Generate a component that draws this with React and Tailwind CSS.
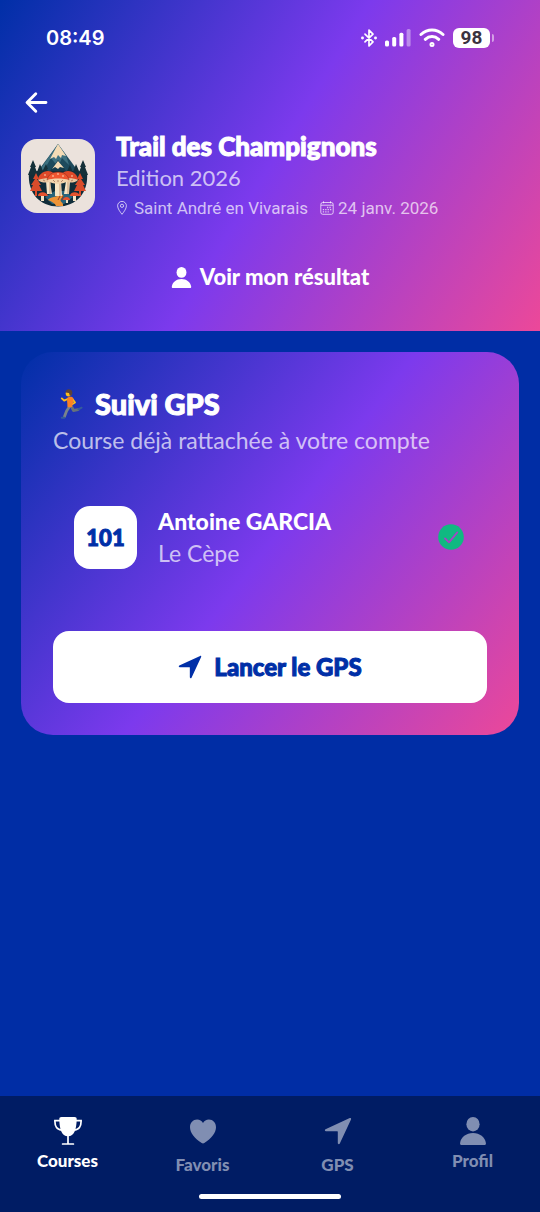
import React, { useState } from "react";
import { IoArrowBack } from "react-icons/io5";

const PersonIcon = ({ className }) => (
  <svg viewBox="0 0 28 28" fill="currentColor" className={className} aria-hidden="true">
    <ellipse cx="14" cy="7.2" rx="6.6" ry="7.2" />
    <path d="M2.8 28C1.5 28 .9 27.200 1.100 25.900 1.900 20.300 7.200 16 14 16s12.100 4.300 12.900 9.900c.2 1.300-.4 2.100-1.700 2.100z" />
  </svg>
);

const NavigateIcon = ({ className }) => (
  <svg viewBox="0 0 28 28" fill="currentColor" className={className} aria-hidden="true">
    <path d="M25.800 1.100 1.500 12.300c-1 .5-.8 2 .5 2h11.300c.3 0 .5.2.5.5v11.300c0 1.300 1.500 1.500 2 .5L27 2.400c.4-.9-.3-1.700-1.200-1.300z" />
  </svg>
);

const HeartIcon = ({ className }) => (
  <svg viewBox="0 0 28 28" fill="currentColor" className={className} aria-hidden="true">
    <path d="M14 26.500c-.4 0-.9-.2-1.300-.5C5.700 21.300 1 15.900 1 10.200 1 5.700 4.100 2.500 8.100 2.500c2.600 0 4.700 1.400 5.900 3.600 1.200-2.200 3.300-3.600 5.900-3.600 4 0 7.100 3.200 7.100 7.700 0 5.700-4.700 11.100-11.700 15.800-.4.300-.9.5-1.300.5z" />
  </svg>
);

const TrophyIcon = ({ className }) => (
  <svg viewBox="0 0 28 28" fill="none" className={className} aria-hidden="true">
    <path d="M7.500 0h13c1.500 0 2.300.8 2.200 2.400C22.400 12 20.500 19.300 14 19.300S5.600 12 5.300 2.400C5.200.8 6 0 7.500 0z" fill="currentColor" />
    <path d="M6 3.600H.9C.7 9.500 3.100 13 8 13M22 3.600h5.100C27.300 9.500 24.900 13 20 13M14 18v8.500M8.600 27h10.800" stroke="currentColor" strokeWidth="1.700" strokeLinecap="round" />
  </svg>
);

const PinIcon = () => (
  <svg viewBox="0 0 12 16" fill="none" stroke="currentColor" className="h-4 w-3" aria-hidden="true">
    <path d="M6 14.300C4.200 12 1.600 8.600 1.600 5.800a4.400 4.400 0 0 1 8.800 0C10.400 8.600 7.800 12 6 14.300z" />
    <circle cx="6" cy="5.800" r="1.600" />
  </svg>
);

const CalendarIcon = () => (
  <svg viewBox="0 0 14 14" fill="none" stroke="currentColor" className="size-3.5" aria-hidden="true">
    <rect x=".8" y="1.500" width="12.400" height="11.800" rx="2" />
    <path d="M1 4.200h12M3.500 .3v2M10.500 .3v2" />
    <path d="M7 6.500h4.500M2.800 8.600h8.700M2.800 10.800h6" strokeWidth="1.300" strokeDasharray="1.300 1.100" />
  </svg>
);

const RunnerIcon = () => (
  <svg viewBox="0 0 24 32" fill="none" className="h-8 w-6" strokeLinecap="round" strokeLinejoin="round" aria-hidden="true">
    <path d="M12.500 18.500 14.500 22.500 19 21.700" stroke="#66717a" strokeWidth="2.800" />
    <path d="M19.500 21.300 22.600 19.700" stroke="#345c9c" strokeWidth="2" />
    <path d="M10.500 18.500 7.600 23 5.500 28.500" stroke="#78838b" strokeWidth="2.800" />
    <path d="M5.300 29.800H2.800" stroke="#345c9c" strokeWidth="2" />
    <path d="M8.600 11 5.200 12.600 2.800 10.400" stroke="#ffbe19" strokeWidth="1.900" />
    <path d="M13.500 11 16 14.500 13.500 16" stroke="#ffbe19" strokeWidth="1.900" />
    <path d="M8.500 9.600c2-1.300 5-1 5.700.5.600 2.500-.7 6.300-1.100 8.600-1.500 1-4 .8-4.700-.3.300-3-1-6.200.1-8.800z" fill="#fb8124" />
    <circle cx="9.600" cy="5.500" r="2.900" fill="#ffbe19" />
    <path d="M6.500 4.500C6.500 2.300 8.200 1.200 10 1.300c2.400.1 3.800 2.100 3.300 4.200-.3 1.500-1.300 2.400-2.400 2.600L10 5z" fill="#5d4239" />
  </svg>
);

const CheckIcon = () => (
  <svg viewBox="0 0 26 26" className="size-[26px]" role="img" aria-label="Rattachée">
    <circle cx="13" cy="13" r="12.800" fill="#10b981" />
    <path d="m7 14.400 4 3.900 8.200-9.800" fill="none" stroke="#a93fc7" strokeWidth="1.800" strokeLinecap="round" strokeLinejoin="round" />
  </svg>
);

const RaceLogo = () => (
  <svg viewBox="0 0 74 74" className="size-[74px] shrink-0 rounded-2xl" role="img" aria-label="Logo Trail des Champignons">
    <rect width="74" height="74" fill="#ebe2dc" />
    {/* mountain */}
    <path d="M37 5 60 36H14z" fill="#1d4a5c" />
    <path d="m37 5 8 11 3 10-7-7-4 9-7-9-7 12-5 1z" fill="#3e7180" />
    <path d="m37 5 8 12-4-1-1 3-3-3-2 4-2-2-4 2z" fill="#f5dcb6" />
    <path d="m37 21 11 15H26z" fill="#143b4b" />
    <path d="m37 22 6 7-4-1-2 2-3-2-3 2z" fill="#f5dcb6" />
    {/* forest and ground */}
    <path d="M8 33C6 54 19 67.500 37 67.500S68 54 66 33l-9-1H17z" fill="#112d39" />
    <path d="m12 21-3 7h1l-3 8h10l-3-8h1zM19 25l-3 8h1l-2 6h9l-3-7h1zM25 25l-3 6v6h7l-3-7h1zM62 21l-3 7h1l-3 8h10l-3-8h1zM55 25l-3 8h1l-2 6h9l-3-7h1zM49 26l-3 6v6h6l-1-7z" fill="#143039" />
    <path d="m15 34-3 6h2l-4 6h2l-3 6h5v5h2v-5h5l-3-6h2l-4-6h2zM59 34l-3 6h2l-4 6h2l-3 6h5v5h2v-5h5l-3-6h2l-4-6h2z" fill="#d94c2b" />
    <path d="m24 58 10-6h10l8 6-9 7H31z" fill="#28647b" />
    <path d="M40 55c-3 3-12 3-13 6 4 2 7 3 8 6h7c1-4-4-4-2-7s4-3 0-5z" fill="#ee9436" />
    <path d="m39 57-2 4m5-4-1 4" stroke="#933b25" />
    {/* stems */}
    <path d="M25 42h4l2 13h-5zM45 42h4l-1 13h-5zM34 42h6l1 15h-7zM20 56h3v6h-3zM52 56h3v6h-3zM45 60h2v4h-2z" fill="#f6e5c5" />
    <path d="M39 42v15M29 43v12M47 43v12" stroke="#c69b77" />
    {/* caps */}
    <path d="M17 41c0-5 5-9 10-9 4 0 8 3 9 8zM38 40c1-5 5-8 9-8 5 0 10 4 10 9z" fill="#df4929" />
    <path d="M17 41c4-2 14-2 17-1-3 4-13 5-17 1zM40 40c5-1 14-1 17 1-4 4-13 3-17-1z" fill="#eac8a0" />
    <path d="M26 41c1-5 5-8 11-8s10 3 11 8z" fill="#ef5630" stroke="#7a261b" strokeWidth=".5" />
    <path d="M26 41c5-2 17-2 22 0-4 5-18 5-22 0z" fill="#f2d5ad" />
    <path d="m32 41 2 2m8-2-2 2m-3-2v2M22 41l2 1m28-1-2 1" stroke="#8c5440" strokeWidth=".6" />
    <path d="M17 57c0-5 9-5 10 0zM49 57c0-5 9-5 10 0zM42 61c0-4 7-4 7 0z" fill="#e6532e" />
    <g fill="#ffe9c5">
      <circle cx="32" cy="37" r=".8" />
      <circle cx="37" cy="35" r=".8" />
      <circle cx="42" cy="37" r=".8" />
      <circle cx="24" cy="36" r=".8" />
      <circle cx="51" cy="37" r=".8" />
    </g>
  </svg>
);

const StatusBar = () => (
  <div className="flex h-[76px] items-center justify-between px-[46px] text-white">
    <span className="font-['Inter'] text-xl font-semibold">08:49</span>
    <div className="flex items-center gap-2">
      <svg viewBox="0 0 16 20" fill="none" stroke="currentColor" strokeWidth="1.700" strokeLinejoin="round" strokeLinecap="round" className="h-5 w-4" aria-hidden="true">
        <path d="m4 6.200 8 7.600-4 4.200V2l4 4.200-8 7.600" />
        <circle cx="1.500" cy="10" r=".6" fill="currentColor" />
        <circle cx="14.500" cy="10" r=".6" fill="currentColor" />
      </svg>
      <svg viewBox="0 0 26 20" fill="currentColor" className="h-5 w-[26px]" aria-hidden="true">
        <rect y="12.500" width="4" height="6" rx="1.500" />
        <rect x="7.200" y="9" width="4" height="9.500" rx="1.500" />
        <rect x="14.400" y="4.800" width="4" height="13.700" rx="1.500" />
        <rect x="21.600" y="1" width="4" height="17.500" rx="1.500" opacity=".4" />
      </svg>
      <svg viewBox="0 0 26 20" fill="none" stroke="currentColor" strokeWidth="3" strokeLinecap="round" className="h-5 w-[26px]" aria-hidden="true">
        <path d="M2 6.500c6.500-6 15.500-6 22 0M6.300 11.300c4-3.800 9.400-3.800 13.400 0" />
        <circle cx="13" cy="16.500" r="1" />
      </svg>
      <div className="flex items-center gap-[2px]">
        <span className="flex h-5 w-[37px] items-center justify-center rounded-md bg-white font-['Roboto'] text-[19px] font-bold text-[#3b3340]">
          98
        </span>
        <span className="h-2 w-[2px] rounded-r bg-white/50" />
      </div>
    </div>
  </div>
);

const tabs = [
  { id: "courses", label: "Courses", Icon: TrophyIcon, gap: "gap-1" },
  { id: "favoris", label: "Favoris", Icon: HeartIcon, gap: "gap-2" },
  { id: "gps", label: "GPS", Icon: NavigateIcon, gap: "gap-2" },
  { id: "profil", label: "Profil", Icon: PersonIcon, gap: "gap-1" },
];

const App = () => {
  const [activeTab, setActiveTab] = useState("courses");

  return (
    <div className="flex min-h-screen flex-col bg-[#002da5] font-['Lato',sans-serif] text-white">
      <header className="bg-[linear-gradient(121.5deg,#002fa7_0%,#7c3aed_50%,#ec4899_100%)] pb-[38px]">
        <StatusBar />
        <div className="px-[21px]">
          <button type="button" aria-label="Retour" className="block pt-[11px] pb-3">
            <IoArrowBack className="size-[31px]" />
          </button>
          <div className="flex items-center gap-[21px]">
            <RaceLogo />
            <div>
              <h1 className="text-[26px] leading-8 font-black [-webkit-text-stroke:1px]">Trail des Champignons</h1>
              <p className="text-[22px] leading-8 text-white/70">Edition 2026</p>
              <div className="flex items-center gap-3 font-['Roboto'] text-[17px] leading-7 text-white/70">
                <span className="flex items-center gap-1.5">
                  <PinIcon />
                  Saint André en Vivarais
                </span>
                <span className="flex items-center gap-1">
                  <CalendarIcon />
                  24 janv. 2026
                </span>
              </div>
            </div>
          </div>
          <button type="button" className="mx-auto mt-[39px] flex items-center gap-2 text-[22px] leading-8 font-black">
            <PersonIcon className="size-[21px]" />
            Voir mon résultat
          </button>
        </div>
      </header>

      <main className="flex-1 p-[21px]">
        <section className="rounded-[32px] bg-[linear-gradient(127.5deg,#002fa7_0%,#7c3aed_50%,#ec4899_100%)] p-8">
          <h2 className="flex items-center gap-3 pl-1.5 text-[29px] leading-10 font-black [-webkit-text-stroke:1px]">
            <RunnerIcon />
            Suivi GPS
          </h2>
          <p className="text-[23px] leading-8 text-white/70">Course déjà rattachée à votre compte</p>

          <div className="mt-7 mb-[41px] flex items-center gap-[21px] py-[21px] pr-[23px] pl-[21px]">
            <span className="flex size-[63px] items-center justify-center rounded-2xl bg-white text-[22px] font-black text-[#002fa7] [-webkit-text-stroke:1px]">
              101
            </span>
            <div className="flex-1">
              <p className="text-[23px] leading-8 font-black">Antoine GARCIA</p>
              <p className="text-[23px] leading-8 text-white/70">Le Cèpe</p>
            </div>
            <CheckIcon />
          </div>

          <button
            type="button"
            className="flex h-[72px] w-full items-center justify-center gap-3 rounded-2xl bg-white text-2xl font-black text-[#002fa7] [-webkit-text-stroke:1px]"
          >
            <NavigateIcon className="size-6" />
            Lancer le GPS
          </button>
        </section>
      </main>

      <nav className="bg-[#001c64] pb-[13px]">
        <div className="grid h-[98px] grid-cols-4 pt-[21px]">
          {tabs.map(({ id, label, Icon, gap }) => (
            <button
              key={id}
              type="button"
              onClick={() => setActiveTab(id)}
              className={`flex flex-col items-center ${gap} text-[17px] leading-6 font-black ${
                activeTab === id ? "text-white" : "text-[#808eb2]"
              }`}
            >
              <Icon className="size-7" />
              {label}
            </button>
          ))}
        </div>
        <div className="mx-auto h-[5px] w-[142px] rounded-full bg-white" />
      </nav>
    </div>
  );
};

export default App;
